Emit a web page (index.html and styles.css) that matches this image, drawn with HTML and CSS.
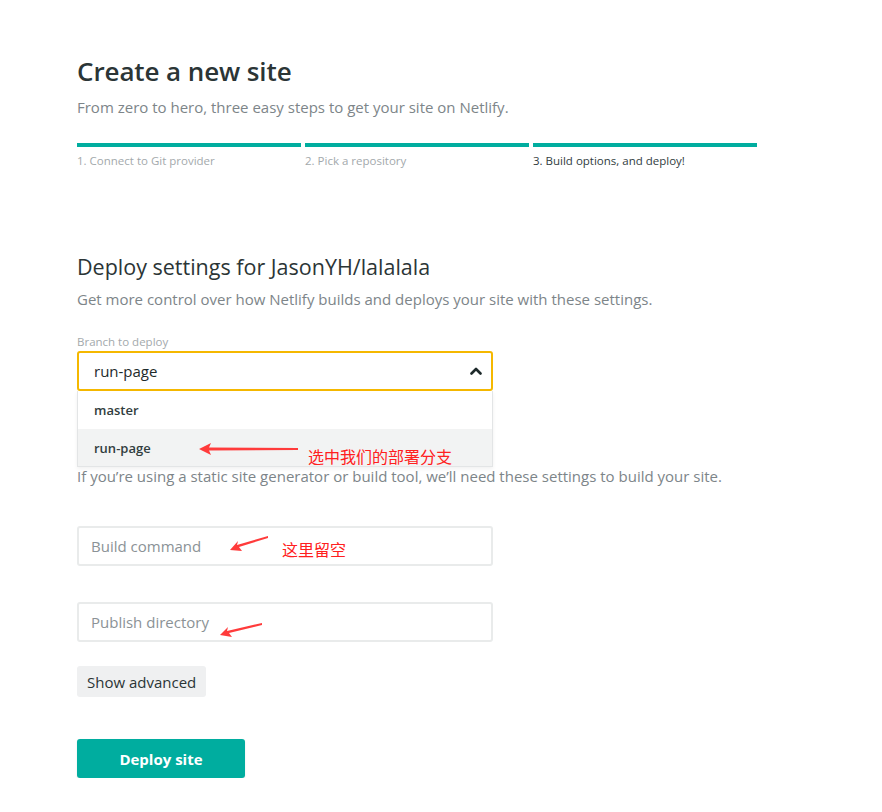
FILE: index.html
```html
<!DOCTYPE html>
<html lang="en">
<head>
<meta charset="utf-8">
<title>Create a new site</title>
<link rel="stylesheet" href="styles.css">
</head>
<body>
<main class="page">
  <header class="intro">
    <h1 class="title">Create a new site</h1>
    <p class="lead">From zero to hero, three easy steps to get your site on Netlify.</p>
  </header>

  <ol class="steps">
    <li class="step">1. Connect to Git provider</li>
    <li class="step">2. Pick a repository</li>
    <li class="step step-current">3. Build options, and deploy!</li>
  </ol>

  <section class="settings">
    <h2 class="section-title">Deploy settings for JasonYH/lalalala</h2>
    <p class="lead">Get more control over how Netlify builds and deploys your site with these settings.</p>

    <div class="field-group">
      <label class="field-label">Branch to deploy</label>
      <div class="select">
        <div class="select-box">
          <span class="select-value">run-page</span>
          <svg class="chevron" width="12" height="8" viewBox="0 0 12 8"><path d="M1.5 6.5 L6 2 L10.5 6.5" fill="none" stroke="#1e2a2b" stroke-width="2.6" stroke-linecap="round" stroke-linejoin="round"/></svg>
        </div>
        <ul class="menu">
          <li class="menu-item">master</li>
          <li class="menu-item menu-item-active">run-page</li>
        </ul>
        <div class="note note-branch">
          <svg class="arrow" width="100" height="14" viewBox="0 0 100 14"><polygon points="0,7 12,1 10,5.5 99,6 99,8 10,8.5 12,13" fill="#ff3b3b"/></svg>
          <span class="note-text">选中我们的部署分支</span>
        </div>
      </div>
      <p class="lead lead-build">If you’re using a static site generator or build tool, we’ll need these settings to build your site.</p>
    </div>

    <div class="input-wrap">
      <input class="text-input" type="text" placeholder="Build command">
      <div class="note note-build">
        <svg class="arrow" width="40" height="16" viewBox="0 0 40 16"><polygon points="0,14 8,5 7,9 38,0 38,2 9,11 12,15" fill="#ff3b3b"/></svg>
        <span class="note-text">这里留空</span>
      </div>
    </div>

    <div class="input-wrap">
      <input class="text-input" type="text" placeholder="Publish directory">
      <div class="note note-publish">
        <svg class="arrow" width="44" height="14" viewBox="0 0 44 14"><polygon points="0,12 8,4 7,8 42,0 42,2 9,10 12,14" fill="#ff3b3b"/></svg>
      </div>
    </div>

    <button class="btn btn-secondary" type="button">Show advanced</button>
    <div class="actions">
      <button class="btn btn-primary" type="button">Deploy site</button>
    </div>
  </section>
</main>
</body>
</html>
```

FILE: styles.css
```css
* { box-sizing: border-box; }
html, body { margin: 0; padding: 0; background: #fff; }
body {
  font-family: "Open Sans", "Noto Sans", "Noto Sans CJK SC", sans-serif;
  color: #313d3e;
}
.page {
  width: 680px;
  margin-left: 77px;
  padding-top: 53px;
}
.title {
  margin: 0;
  font-size: 26px;
  font-weight: 600;
  line-height: 36px;
  color: #2b3536;
  letter-spacing: -0.1px;
}
.lead {
  margin: 0;
  font-size: 15px;
  line-height: 22px;
  color: #7d8589;
}
.intro .lead { margin-top: 7px; }
.steps {
  list-style: none;
  margin: 25px 0 0;
  padding: 0;
  display: grid;
  grid-template-columns: repeat(3, 1fr);
  gap: 4px;
}
.step {
  border-top: 4px solid #00ad9f;
  padding-top: 6px;
  font-size: 11.5px;
  line-height: 16px;
  color: #a3a9ac;
}
.step-current { color: #313d3e; }
.settings { margin-top: 83px; width: 416px; }
.section-title {
  margin: 0;
  font-size: 21.5px;
  font-weight: 500;
  line-height: 30px;
  color: #2b3536;
  white-space: nowrap;
}
.settings > .lead { margin-top: 6px; white-space: nowrap; }
.field-group { margin-top: 25px; }
.field-label {
  display: block;
  font-size: 11.5px;
  line-height: 14px;
  color: #a3a9ac;
  margin-bottom: 2px;
}
.select { position: relative; }
.select-box {
  height: 40px;
  border: 2px solid #f5b800;
  border-radius: 3px;
  display: flex;
  align-items: center;
  justify-content: space-between;
  padding: 0 9px 0 15px;
}
.select-value { font-size: 15px; font-weight: 500; color: #1e2a2b; }
.chevron { display: block; }
.menu {
  list-style: none;
  margin: 0;
  padding: 0;
  border: 1px solid #e3e5e6;
  border-top: 0;
  box-shadow: 0 2px 4px rgba(0,0,0,0.06);
  background: #fff;
}
.menu-item {
  height: 38px;
  display: flex;
  align-items: center;
  padding-left: 16px;
  font-size: 13px;
  font-weight: 600;
  color: #313d3e;
}
.menu-item-active { background: #f2f3f3; height: 37px; }
.lead-build { margin-top: 0; white-space: nowrap; position: relative; top: -2px; }
.note {
  position: absolute;
  display: flex;
  align-items: flex-start;
  pointer-events: none;
}
.note-text {
  font-family: "Noto Sans CJK SC", sans-serif;
  font-size: 16px;
  color: #ff2020;
  line-height: 20px;
  white-space: nowrap;
}
.arrow { display: block; flex: none; }
.note-branch { left: 122px; top: 91px; }
.note-branch .note-text { margin-left: 9px; margin-top: 4px; }
.input-wrap { position: relative; margin-top: 37px; }
.input-wrap + .input-wrap { margin-top: 36px; }
.text-input {
  display: block;
  width: 416px;
  height: 40px;
  border: 2px solid #e9ebeb;
  border-radius: 3px;
  padding: 0 12px;
  font-family: inherit;
  font-size: 15px;
  color: #313d3e;
  outline: none;
}
.text-input::placeholder { color: #8b9296; }
.note-build { left: 153px; top: 10px; }
.note-build .note-text { margin-left: 12px; margin-top: 3px; }
.note-publish { left: 143px; top: 21px; }
.btn {
  font-family: inherit;
  border: 0;
  border-radius: 3px;
  cursor: pointer;
}
.btn-secondary {
  display: block;
  margin-top: 24px;
  height: 31px;
  padding: 0 10px;
  background: #eff0f1;
  color: #2b3536;
  font-size: 15px;
  font-weight: 500;
}
.actions { margin-top: 42px; }
.btn-primary {
  width: 168px;
  height: 39px;
  background: #00ad9f;
  color: #fff;
  font-size: 15px;
  font-weight: 700;
  box-shadow: 0 1px 2px rgba(0,0,0,0.1);
}
```
